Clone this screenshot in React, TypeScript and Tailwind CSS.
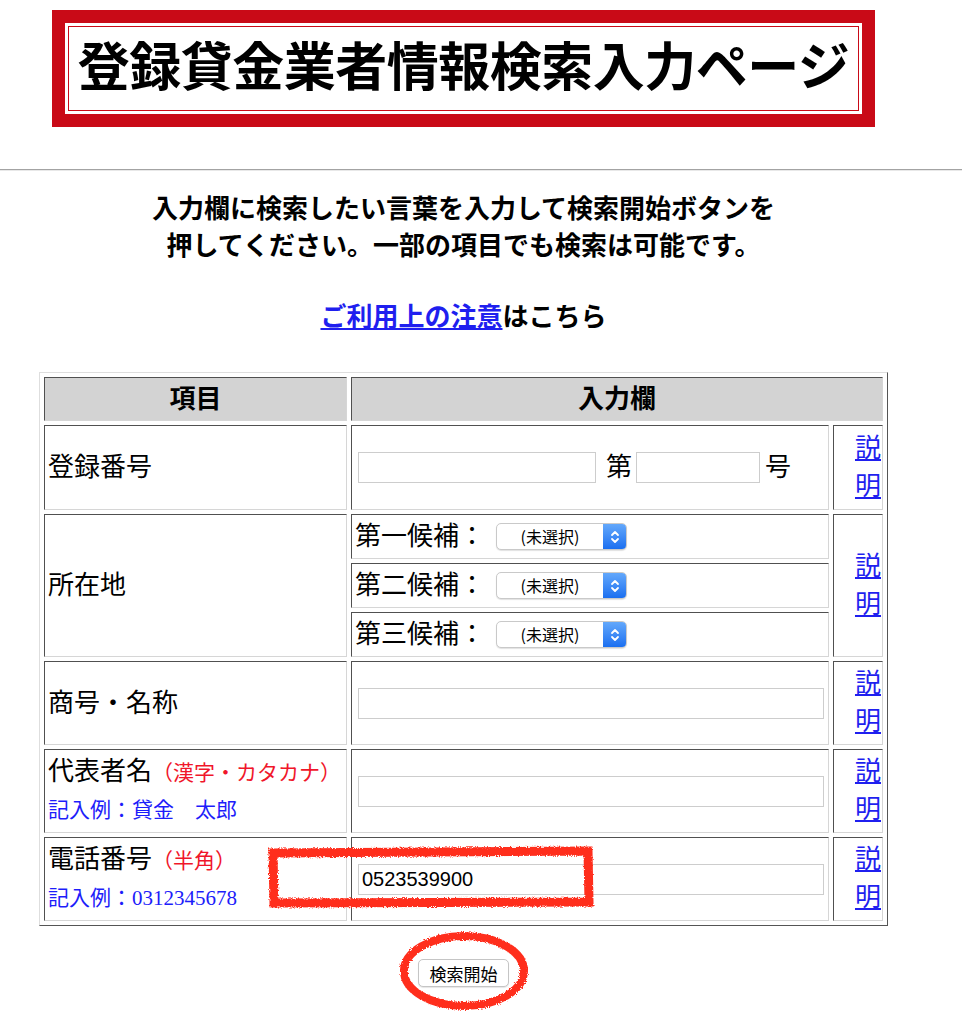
import React from 'react';

const CELL =
  'border border-t-[#505050] border-l-[#505050] border-r-[#d6d6d6] border-b-[#d6d6d6]';
const INPUT =
  'h-[31px] border border-[#cdcdcd] bg-white px-[3px] outline-none font-["Liberation_Sans",sans-serif] text-[20px] text-black';
const BLUE = 'text-[#1d1dfa]';
const RED = 'text-[#f0162a]';

function ExplainCell({ rowSpan }: { rowSpan?: number }) {
  return (
    <td rowSpan={rowSpan} className={`${CELL} pl-[3px] pr-[1px] text-right leading-[38px]`}>
      <a href="#" className="text-[#1f1fef] underline underline-offset-2">
        説明
      </a>
    </td>
  );
}

function PrefSelect() {
  return (
    <div className="ml-[11px] flex h-[27px] w-[131px] overflow-hidden rounded-[5px] border border-[#c9c9c9] bg-white shadow-[0_1px_1px_rgba(0,0,0,0.12)]">
      <span className='flex-1 text-center font-["Noto_Sans_CJK_JP",sans-serif] text-[16px] leading-[25px] text-black'>
        (未選択)
      </span>
      <span className="flex w-[23px] items-center justify-center bg-linear-to-b from-[#63a8fb] to-[#1a6ff0]">
        <svg width="10" height="16" viewBox="0 0 10 16" fill="none" stroke="white" strokeWidth="1.8" strokeLinecap="round" strokeLinejoin="round">
          <path d="M2 6 L5 3 L8 6" />
          <path d="M2 10 L5 13 L8 10" />
        </svg>
      </span>
    </div>
  );
}

function PrefRow({ label }: { label: string }) {
  return (
    <td className={`${CELL} px-[3px]`}>
      <div className="flex items-center">
        <span>{label}</span>
        <PrefSelect />
      </div>
    </td>
  );
}

export default function App() {
  return (
    <div className='relative min-h-[1024px] w-[962px] bg-white font-["Liberation_Serif","Noto_Sans_CJK_JP",serif] text-[26px] text-black'>
      <div className="w-[927px] pt-[10px]">
        <div className="mx-auto h-[117px] w-[823px] bg-[#c90a17] p-[13px]">
          <div className="h-full bg-white p-[3px]">
            <div className="flex h-full items-center justify-center border border-[#c90a17]">
              <h1 className="text-[52px] font-bold leading-none tracking-[-0.5px]">登録貸金業者情報検索入力ページ</h1>
            </div>
          </div>
        </div>
      </div>

      <div className="mt-[42px] h-[2px] border-t border-b border-t-[#a3a3a3] border-b-[#e8e8e8]" />

      <div className="w-[927px]">
        <p className="mt-[20px] text-center font-bold leading-[37px]">
          入力欄に検索したい言葉を入力して検索開始ボタンを
          <br />
          押してください。一部の項目でも検索は可能です。
        </p>
        <p className="mt-[34px] text-center font-bold leading-[37px]">
          <a href="#" className="text-[#1f1fef] underline underline-offset-2">
            ご利用上の注意
          </a>
          はこちら
        </p>

        <table className="mx-auto mt-[36px] w-[849px] table-fixed border-separate border-spacing-[4px] border border-t-[#dedede] border-l-[#dedede] border-r-[#555] border-b-[#555]">
          <colgroup>
            <col className="w-[303px]" />
            <col className="w-[478px]" />
            <col className="w-[50px]" />
          </colgroup>
          <tbody>
            <tr className="h-[44px]">
              <th className={`${CELL} bg-[#d3d3d3] text-center font-bold`}>項目</th>
              <th colSpan={2} className={`${CELL} bg-[#d3d3d3] text-center font-bold`}>
                入力欄
              </th>
            </tr>

            <tr className="h-[85px]">
              <td className={`${CELL} px-[3px]`}>登録番号</td>
              <td className={`${CELL} px-[3px]`}>
                <div className="flex items-center">
                  <input className={`${INPUT} ml-[3px] w-[238px]`} />
                  <span className="ml-[10px]">第</span>
                  <input className={`${INPUT} ml-[4px] w-[124px]`} />
                  <span className="ml-[5px]">号</span>
                </div>
              </td>
              <ExplainCell />
            </tr>

            <tr className="h-[45px]">
              <td rowSpan={3} className={`${CELL} px-[3px]`}>
                所在地
              </td>
              <PrefRow label="第一候補：" />
              <ExplainCell rowSpan={3} />
            </tr>
            <tr className="h-[45px]">
              <PrefRow label="第二候補：" />
            </tr>
            <tr className="h-[45px]">
              <PrefRow label="第三候補：" />
            </tr>

            <tr className="h-[84px]">
              <td className={`${CELL} px-[3px]`}>商号・名称</td>
              <td className={`${CELL} px-[3px]`}>
                <input className={`${INPUT} ml-[3px] block w-[466px]`} />
              </td>
              <ExplainCell />
            </tr>

            <tr className="h-[84px]">
              <td className={`${CELL} px-[3px] leading-[37px]`}>
                <div>
                  代表者名<span className={`${RED} text-[21px]`}>（漢字・カタカナ）</span>
                </div>
                <div className={`${BLUE} text-[21px]`}>記入例：貸金　太郎</div>
              </td>
              <td className={`${CELL} px-[3px]`}>
                <input className={`${INPUT} ml-[3px] block w-[466px]`} />
              </td>
              <ExplainCell />
            </tr>

            <tr className="h-[84px]">
              <td className={`${CELL} px-[3px] leading-[37px]`}>
                <div>
                  電話番号<span className={`${RED} text-[21px]`}>（半角）</span>
                </div>
                <div className={`${BLUE} text-[21px]`}>記入例：0312345678</div>
              </td>
              <td className={`${CELL} px-[3px]`}>
                <input className={`${INPUT} ml-[3px] block w-[466px]`} defaultValue="0523539900" />
              </td>
              <ExplainCell />
            </tr>
          </tbody>
        </table>

        <button className='mx-auto mt-[33px] block h-[28px] w-[91px] rounded-[5px] border border-[#c5c5c5] bg-white font-["Noto_Sans_CJK_JP",sans-serif] text-[17px] leading-none text-black shadow-[0_1px_1px_rgba(0,0,0,0.1)]'>
          検索開始
        </button>
      </div>

      {/* hand-drawn annotations */}
      <svg className="pointer-events-none absolute left-[264px] top-[843px]" width="332" height="68" viewBox="0 0 332 68">
        <defs>
          <filter id="crayonA" x="-5%" y="-20%" width="110%" height="140%">
            <feTurbulence type="fractalNoise" baseFrequency="0.9" numOctaves="2" result="n" />
            <feDisplacementMap in="SourceGraphic" in2="n" scale="4" />
          </filter>
        </defs>
        <path d="M9 10 L324 8 L325 59 L10 60 Z" fill="none" stroke="#ff2d1d" strokeWidth="9" strokeLinejoin="miter" filter="url(#crayonA)" />
      </svg>
      <svg className="pointer-events-none absolute left-[394px] top-[926px]" width="140" height="90" viewBox="0 0 140 90">
        <defs>
          <filter id="crayonB" x="-10%" y="-10%" width="120%" height="120%">
            <feTurbulence type="fractalNoise" baseFrequency="0.9" numOctaves="2" result="n" />
            <feDisplacementMap in="SourceGraphic" in2="n" scale="4" />
          </filter>
        </defs>
        <ellipse cx="70" cy="45" rx="60" ry="35" fill="none" stroke="#ff2d1d" strokeWidth="8" filter="url(#crayonB)" />
      </svg>
    </div>
  );
}
